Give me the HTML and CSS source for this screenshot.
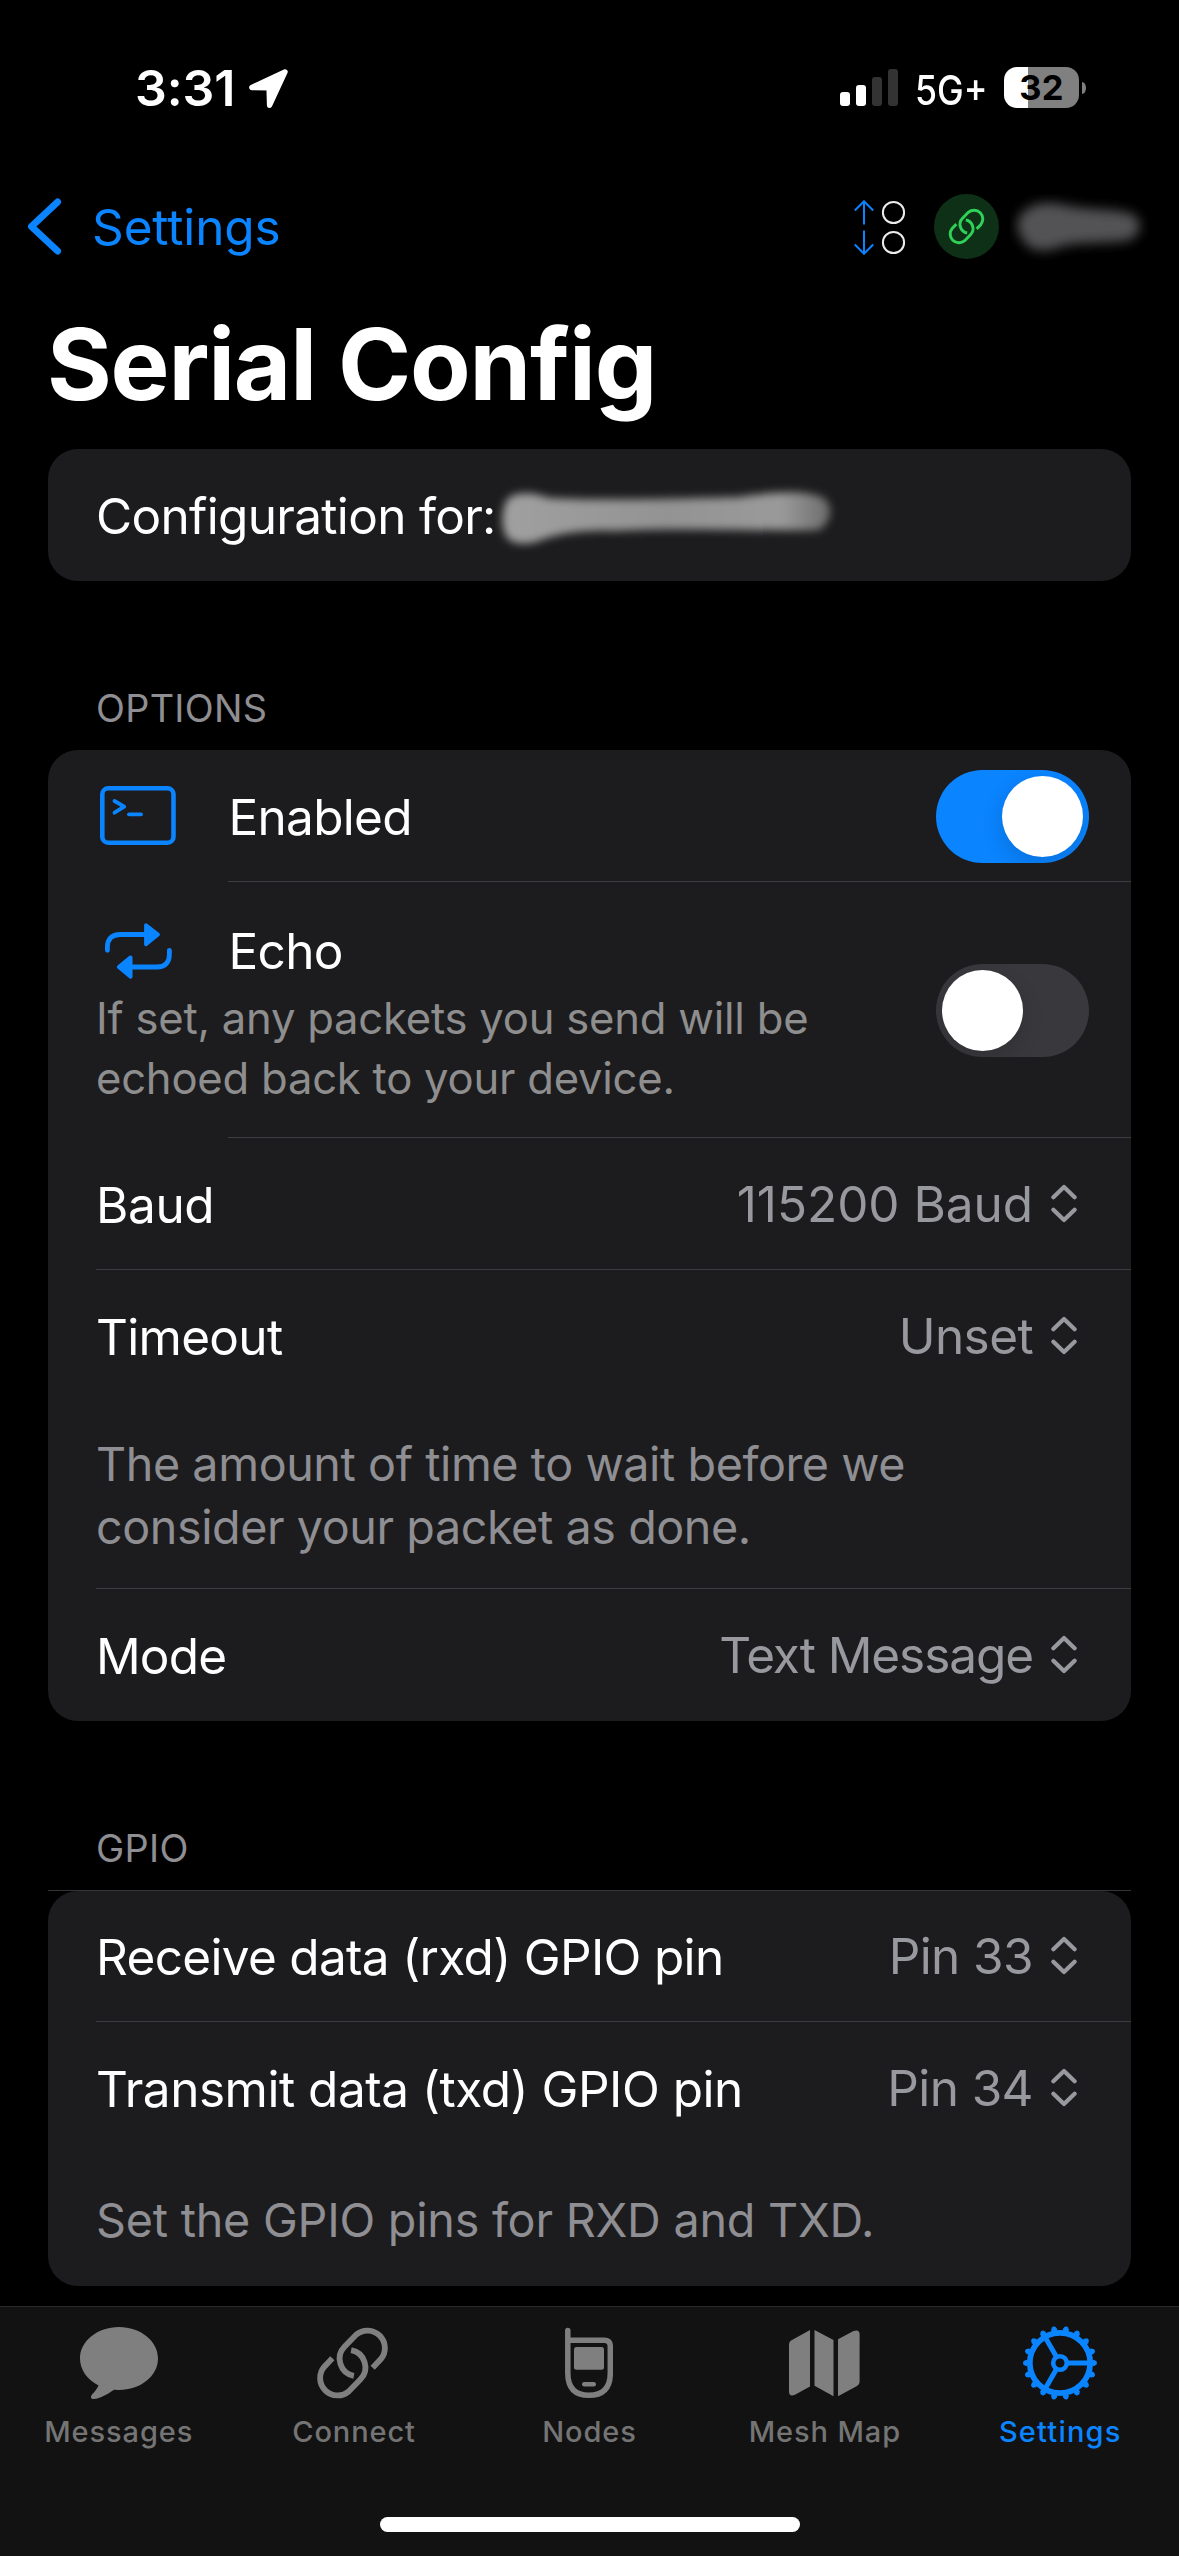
FILE: index.html
```html
<!DOCTYPE html>
<html lang="en">
<head>
<meta charset="utf-8">
<title>Serial Config</title>
<link rel="stylesheet" href="styles.css">
</head>
<body>
<svg class="defs" width="0" height="0" aria-hidden="true">
  <symbol id="link" viewBox="0 0 72.5 73">
    <g fill="none" stroke="currentColor" stroke-width="5.8">
      <path d="M56.3 41.2L64.2 32.9A17.3 17.3 0 0 0 39.8 8.5L28.5 20.1A17.3 17.3 0 0 0 37.6 49.3"/>
      <path d="M16.2 31.8L8.3 40.1A17.3 17.3 0 0 0 32.7 64.5L44 52.9A17.3 17.3 0 0 0 34.9 23.7"/>
    </g>
  </symbol>
  <symbol id="updown" viewBox="0 0 26 39">
    <path d="M2.4 13.2L13 3L23.6 13.2M2.4 25.8L13 36L23.6 25.8" fill="none" stroke="currentColor" stroke-width="4.2" stroke-linecap="round" stroke-linejoin="round"/>
  </symbol>
</svg>

<div class="screen">
  <header class="status">
    <span class="status-time">3:31</span>
    <svg class="status-location" width="39" height="39" viewBox="0 0 39 39"><path d="M36 2.9L2.9 18.5L20.1 18.8L20.6 36.2Z" fill="#fff" stroke="#fff" stroke-width="5.4" stroke-linejoin="round"/></svg>
    <svg class="status-signal" width="58" height="37" viewBox="0 0 58 37">
      <rect x="0" y="23" width="10" height="14" rx="3" fill="#fff"/>
      <rect x="16" y="16" width="10" height="21" rx="3" fill="#fff"/>
      <rect x="32" y="8" width="10" height="29" rx="3" fill="#333"/>
      <rect x="48" y="0" width="10" height="37" rx="3" fill="#333"/>
    </svg>
    <span class="status-network"><span class="status-network-text">5G+</span></span>
    <span class="battery">32</span>
    <span class="battery-cap"></span>
  </header>

  <nav class="nav">
    <a class="back">
      <svg width="35" height="57" viewBox="0 0 35 57"><path d="M30.6 3.9L4.4 28.5L30.6 53.1" fill="none" stroke="currentColor" stroke-width="6.8" stroke-linecap="round" stroke-linejoin="round"/></svg>
      <span class="back-label">Settings</span>
    </a>
    <div class="device">
      <svg class="traffic" width="52" height="55" viewBox="0 0 52 55" fill="none" stroke-width="2">
        <path d="M10 24.5V1.5M.8 10.5L10 1.3L19.2 10.5M10 30.5V53.5M.8 44.5L10 53.7L19.2 44.5" stroke="#0a84ff"/>
        <circle cx="39.5" cy="12.5" r="10.6" stroke="#ececec"/>
        <circle cx="39.5" cy="42.5" r="10.6" stroke="#ececec"/>
      </svg>
      <span class="linked"><svg width="37" height="37"><use href="#link"/></svg></span>
      <svg class="node-name" width="139" height="66" viewBox="0 0 139 66">
        <defs><filter id="soft" x="-20%" y="-30%" width="140%" height="160%"><feGaussianBlur stdDeviation="6"/></filter></defs>
        <path d="M10 22C20 8 38 7 54 11C78 17 108 14 124 21C133 28 131 40 120 46C98 50 74 47 52 52C36 59 20 58 14 47C8 40 5 30 10 22Z" fill="#525254" filter="url(#soft)"/>
      </svg>
    </div>
  </nav>

  <h1 class="title">Serial Config</h1>

  <main class="content">
    <section class="card">
      <div class="row row-only">
        <span class="label tight">Configuration for:</span>
        <svg class="smudge" width="344" height="76" viewBox="0 0 344 76">
          <defs>
            <filter id="smear" x="-10%" y="-30%" width="120%" height="160%"><feGaussianBlur stdDeviation="4"/></filter>
            <linearGradient id="grey" x1="0" y1="0" x2="1" y2="0">
              <stop offset="0" stop-color="#a0a0a0"/><stop offset=".5" stop-color="#939393"/><stop offset=".85" stop-color="#9a9a9a"/><stop offset="1" stop-color="#6c6c6c"/>
            </linearGradient>
          </defs>
          <path d="M10 28C14 15 36 15 54 22C110 25 200 22 244 21C276 16 314 13 330 23C339 32 336 47 324 54C276 56 190 51 120 55C80 54 60 59 44 65C28 70 14 68 10 58C6 48 7 36 10 28Z" fill="url(#grey)" filter="url(#smear)"/>
        </svg>
      </div>
    </section>

    <h2 class="group-title">OPTIONS</h2>
    <section class="card">
      <div class="row row-toggle">
        <svg class="row-icon" width="76" height="64" viewBox="0 0 76 64" fill="none" stroke="currentColor" stroke-linecap="round" stroke-linejoin="round">
          <rect x="2.3" y="4.3" width="71.2" height="54.4" rx="6" stroke-width="4.6"/>
          <path d="M14.5 17L24.2 22.7L14.5 28.7" stroke-width="3.8"/><path d="M29 30.3H41" stroke-width="3.8"/>
        </svg>
        <span class="label">Enabled</span>
        <span class="toggle toggle-on"></span>
      </div>
      <div class="sep sep-icon"></div>
      <div class="row row-echo">
        <div class="echo-text">
          <div class="echo-title">
            <svg class="row-icon" width="76" height="64" viewBox="0 0 76 64">
              <path d="M7.4 31.3V28C7.4 20 12 15.5 20 15.5H46M69.4 31.3V35.5C69.4 43.5 65 48 57 48H31" fill="none" stroke="currentColor" stroke-width="4.8" stroke-linecap="round"/>
              <path d="M46 6.2L58 15.6L46 25.2ZM30.6 38.3L18.8 48L30.6 57.8Z" fill="currentColor" stroke="currentColor" stroke-width="3.8" stroke-linejoin="round"/>
            </svg>
            <span class="label">Echo</span>
          </div>
          <p class="hint">If set, any packets you send will be<br>echoed back to your device.</p>
        </div>
        <span class="toggle"></span>
      </div>
      <div class="sep sep-icon"></div>
      <div class="row">
        <span class="label loose">Baud</span>
        <span class="value wide">115200 Baud</span><svg class="picker" width="26" height="39"><use href="#updown"/></svg>
      </div>
      <div class="sep"></div>
      <div class="row">
        <span class="label timeout">Timeout</span>
        <span class="value">Unset</span><svg class="picker" width="26" height="39"><use href="#updown"/></svg>
      </div>
      <p class="note note-timeout">The amount of time to wait before we<br>consider your packet as done.</p>
      <div class="sep"></div>
      <div class="row row-last">
        <span class="label tighter">Mode</span>
        <span class="value narrow">Text Message</span><svg class="picker" width="26" height="39"><use href="#updown"/></svg>
      </div>
    </section>

    <h2 class="group-title">GPIO</h2>
    <div class="ruled">
      <section class="card">
        <div class="row row-rx">
          <span class="label tight">Receive data (rxd) GPIO pin</span>
          <span class="value">Pin 33</span><svg class="picker" width="26" height="39"><use href="#updown"/></svg>
        </div>
        <div class="sep"></div>
        <div class="row">
          <span class="label tx">Transmit data (txd) GPIO pin</span>
          <span class="value">Pin 34</span><svg class="picker" width="26" height="39"><use href="#updown"/></svg>
        </div>
        <p class="note note-pins">Set the GPIO pins for RXD and TXD.</p>
      </section>
    </div>
  </main>

  <footer class="tabbar">
    <div class="tabs">
      <a class="tab">
        <svg width="78" height="74" viewBox="0 0 78 74"><path d="M39 1C60.5 1 78 15 78 32.5S60.5 64 39 64L34 63.7C28 68 20 72.5 14 73C11 73.2 10 71 12 68.5C15 65.5 17.5 62 18.5 59.5C7 53.5 0 43.5 0 32.5C0 15 17.5 1 39 1Z" fill="currentColor"/></svg>
        <span>Messages</span>
      </a>
      <a class="tab">
        <svg class="tab-link" width="73" height="74"><use href="#link"/></svg>
        <span>Connect</span>
      </a>
      <a class="tab">
        <svg width="48" height="74" viewBox="0 0 48 74">
          <path d="M2.8 4.4V47C2.8 62 10 69.3 24 69.3S45.3 62 45.3 47V20.5Q45.3 14.3 39.3 14.3H2.8" fill="none" stroke="currentColor" stroke-width="5.5" stroke-linecap="round"/>
          <rect x="9" y="21" width="30" height="22.7" rx="2.5" fill="currentColor"/>
          <rect x="17" y="56" width="14" height="4.5" rx="2.2" fill="currentColor"/>
        </svg>
        <span>Nodes</span>
      </a>
      <a class="tab">
        <svg width="71" height="74" viewBox="0 0 71 74" fill="currentColor">
          <path d="M21 4V60.5L6 68.8Q0 71 0 65.5V18.5Q0 15.5 3 14Z"/>
          <path d="M25.5 4L44.5 14V70.3L25.5 59.8Z"/>
          <path d="M49 13.3L64.5 5Q70.6 3 70.6 8.500V56Q70.6 58.5 68 60L49 70.3Z"/>
        </svg>
        <span>Mesh Map</span>
      </a>
      <a class="tab tab-active">
        <svg width="76" height="74" viewBox="0 0 76 74" fill="none" stroke="currentColor">
          <circle cx="38" cy="37" r="30.2" stroke-width="5.7"/>
          <circle cx="38" cy="37" r="33" stroke-width="4" pathLength="180" stroke-dasharray="5 5" stroke-dashoffset="2.5"/>
          <circle cx="38" cy="37" r="34.6" stroke-width="4.8" pathLength="180" stroke-dasharray="0.01 9.99" stroke-linecap="round"/>
          <circle cx="38" cy="37" r="6.8" stroke-width="4.6"/>
          <path d="M46 37H67M34 30.1L23.3 11.6M34 43.9L23.3 62.4" stroke-width="5"/>
        </svg>
        <span>Settings</span>
      </a>
    </div>
    <div class="home"></div>
  </footer>
</div>
</body>
</html>
```
FILE: styles.css
```css
* { box-sizing: border-box; }

body {
  margin: 0;
  background: #000;
  color: #fff;
  font-family: Inter, "Liberation Sans", sans-serif;
}

h1, h2, p { margin: 0; }
svg { display: block; flex: none; }
.defs { position: absolute; }

.screen {
  display: flex;
  flex-direction: column;
  width: 1179px;
  height: 2556px;
  overflow: hidden;
}

/* Status bar */
.status {
  display: flex;
  align-items: center;
  height: 175px;
  padding: 0 93px 0 135px;
}
.status-time {
  width: 114px;
  padding-top: 1px;
  font-size: 50px;
  font-weight: 600;
  letter-spacing: -0.1px;
}
.status-location { margin-top: 2px; }
.status-signal { margin-left: auto; }
.status-network {
  width: 88px;
  margin-left: 17px;
  padding-top: 4px;
  font-size: 41px;
  font-weight: 550;
}
.status-network-text {
  display: block;
  transform: scaleX(0.87);
  transform-origin: left;
}
.battery {
  display: flex;
  align-items: center;
  justify-content: center;
  width: 75px;
  height: 41px;
  margin-left: 1px;
  border-radius: 13px;
  background: linear-gradient(90deg, #fff 24px, #808080 24px);
  color: #000;
  font-size: 34.5px;
  font-weight: 700;
  letter-spacing: 0.3px;
}
.battery-cap {
  width: 4px;
  height: 12px;
  margin-left: 3px;
  border-radius: 0 4px 4px 0 / 0 6px 6px 0;
  background: #808080;
}

/* Navigation */
.nav {
  display: flex;
  align-items: center;
  justify-content: space-between;
  height: 103px;
  padding: 0 30px 0 27px;
}
.back {
  display: flex;
  align-items: center;
  gap: 30px;
  color: #0a84ff;
  font-size: 49.5px;
  letter-spacing: -0.13px;
}
.device { display: flex; align-items: center; }
.traffic { margin-top: 2px; }
.linked {
  display: flex;
  align-items: center;
  justify-content: center;
  width: 65px;
  height: 65px;
  margin: 0 11px 0 28px;
  padding-right: 1px;
  border-radius: 50%;
  background: #0d3016;
  color: #30d158;
}

.title {
  height: 171px;
  padding: 2px 47px 0;
  font-size: 99px;
  font-weight: 700;
  line-height: 168px;
  letter-spacing: -1.2px;
}

/* Grouped list */
.content {
  flex: 1;
  padding: 0 48px;
}
.card {
  overflow: hidden;
  border-radius: 30px;
  background: #1c1c1e;
}
.group-title {
  height: 169px;
  padding: 107px 48px 0;
  color: #8e8e93;
  font-size: 37.8px;
  font-weight: 400;
  line-height: 41px;
  letter-spacing: 0.3px;
}
.ruled { border-top: 1px solid #343438; }

.row {
  display: flex;
  align-items: center;
  height: 131px;
  padding: 0 54px 0 48px;
}
.row-last { height: 132px; padding-bottom: 2px; }
.row-rx { height: 130px; padding-bottom: 2px; }
.row-only { height: 132px; padding-bottom: 2px; }
.row-toggle { padding-right: 42px; }

.row-icon {
  margin-left: 4px;
  margin-right: 52.5px;
  color: #0a84ff;
}
.label {
  padding-top: 3px;
  font-size: 49.5px;
  line-height: 60px;
  letter-spacing: -0.6px;
}
.row-icon + .label { letter-spacing: -0.7px; }
.loose { letter-spacing: -0.4px; }
.tight { letter-spacing: -0.68px; }
.tighter { letter-spacing: -0.85px; }
.timeout { letter-spacing: -0.7px; }
.tx { letter-spacing: -0.48px; }

.value {
  margin-left: auto;
  padding-top: 1px;
  color: #98989f;
  font-size: 49.5px;
  line-height: 60px;
  letter-spacing: -0.6px;
}
.wide { letter-spacing: -0.04px; }
.narrow { letter-spacing: -1.08px; }
.picker { margin-left: 18px; color: #98989f; }
.smudge { margin-left: -1px; }

.sep {
  height: 1px;
  margin-left: 48px;
  background: #3d3d41;
}
.sep-icon { margin-left: 180px; }

.row-echo {
  align-items: flex-start;
  justify-content: space-between;
  height: 255px;
  padding-right: 42px;
}
.echo-text { padding-top: 30px; }
.echo-title {
  display: flex;
  align-items: center;
  height: 77px;
}
.echo-title .label { padding-top: 0; }
.hint {
  color: #8e8e8e;
  font-size: 43.6px;
  line-height: 60px;
  letter-spacing: -0.23px;
  white-space: nowrap;
}
.note {
  padding: 0 48px;
  color: #8e8e93;
  font-size: 46.7px;
  line-height: 63px;
  letter-spacing: -0.43px;
}
.note-timeout { height: 187px; padding-top: 32px; }
.note-pins { height: 133px; padding-top: 36px; letter-spacing: -0.23px; }

/* Switches */
.toggle {
  flex: none;
  width: 153px;
  height: 93px;
  margin-left: auto;
  padding: 6px;
  border-radius: 47px;
  background: #39393d;
}
.toggle::before {
  content: "";
  display: block;
  width: 81px;
  height: 81px;
  border-radius: 50%;
  background: #fff;
}
.toggle-on { background: #0a84ff; }
.toggle-on::before { margin-left: auto; }
.row-toggle .toggle { margin-top: 2px; }
.row-echo .toggle { margin-top: 82px; }
.toggle { overflow: hidden; }
.toggle::before { box-shadow: 0 8px 22px rgba(0, 0, 0, 0.14); }

/* Tab bar */
.tabbar {
  display: flex;
  flex-direction: column;
  align-items: center;
  justify-content: space-between;
  height: 250px;
  padding: 19px 0 24px;
  border-top: 1px solid #2a2a2b;
  background: #121212;
}
.tabs {
  display: grid;
  grid-template-columns: repeat(5, 235.4px);
  width: 1179px;
  padding-left: 1px;
}
.tab {
  display: flex;
  flex-direction: column;
  align-items: center;
  gap: 14px;
  color: #7f7f7f;
}
.tab span {
  color: #747474;
  font-size: 29px;
  font-weight: 500;
  line-height: 36px;
  letter-spacing: 0.9px;
}
.tab-link { margin-right: 4px; }
.tab-active, .tab-active span { color: #0a84ff; }
.tab-active span { letter-spacing: 1.2px; }
.home {
  width: 420px;
  height: 15px;
  border-radius: 8px;
  background: #fff;
}
```
